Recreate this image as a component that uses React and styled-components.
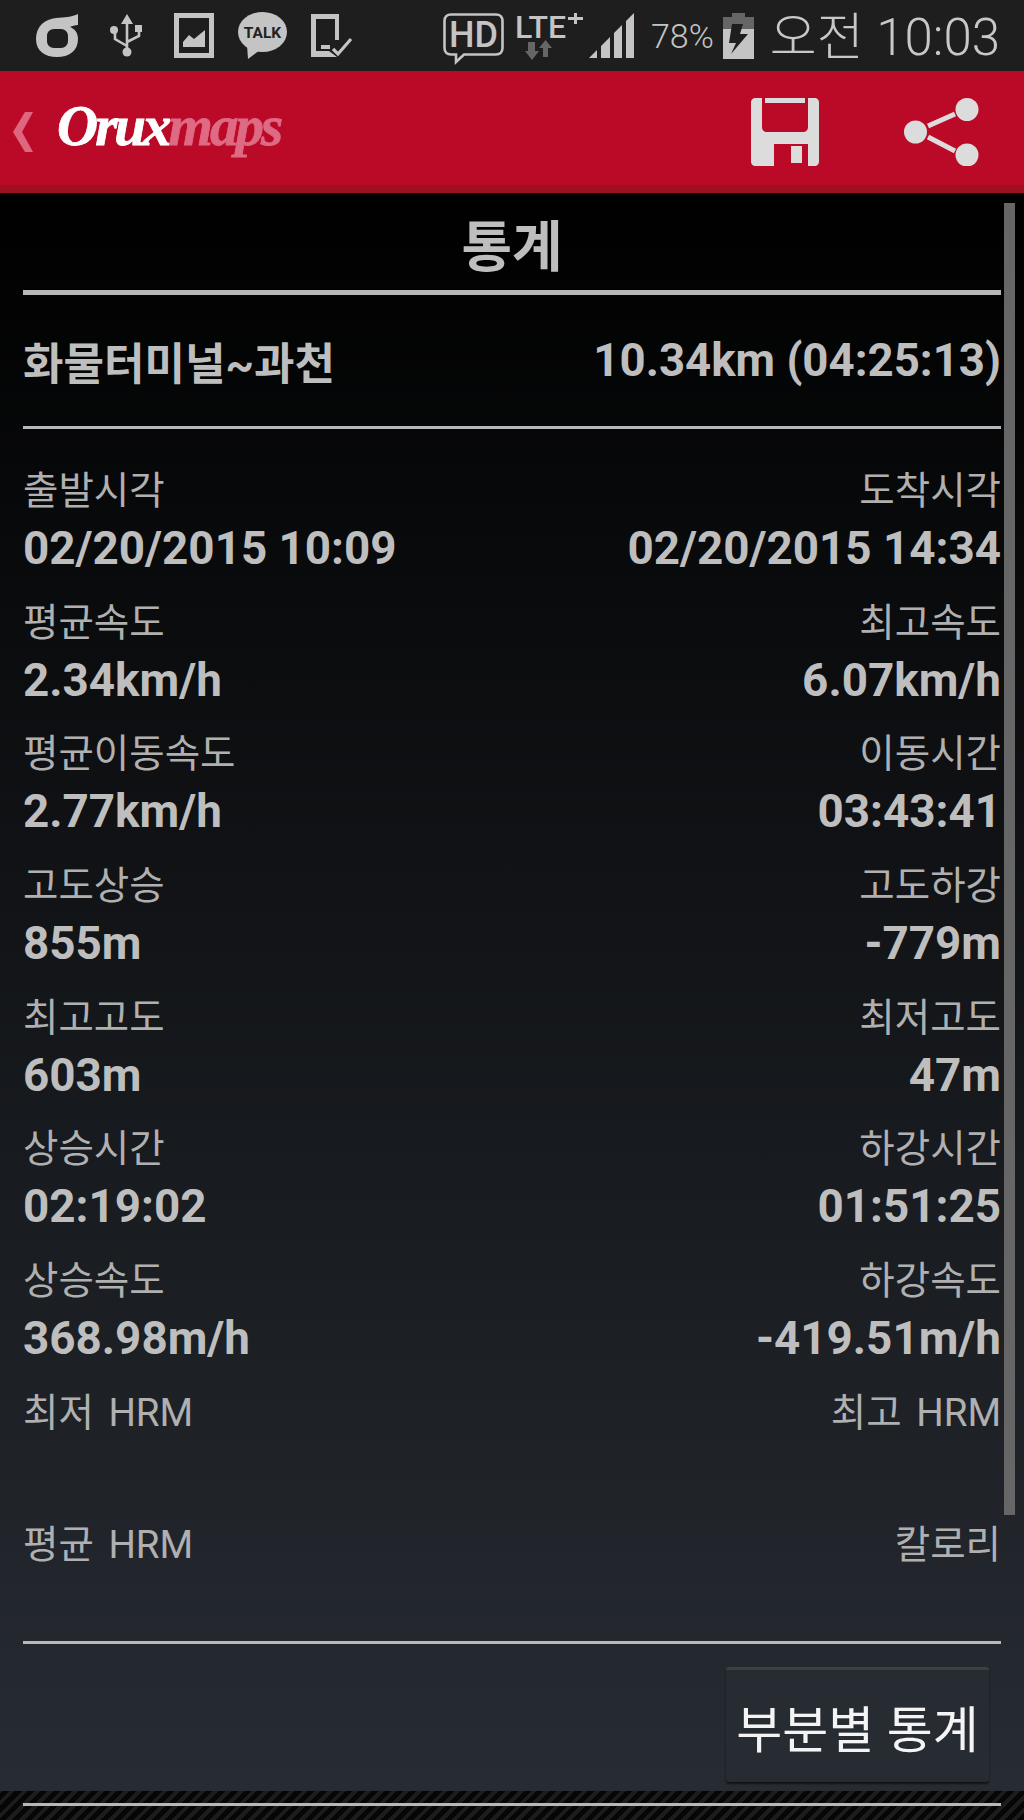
import React from "react";
import styled, { createGlobalStyle } from "styled-components";

const STATS = [
  ["출발시각", "02/20/2015 10:09", "도착시각", "02/20/2015 14:34"],
  ["평균속도", "2.34km/h", "최고속도", "6.07km/h"],
  ["평균이동속도", "2.77km/h", "이동시간", "03:43:41"],
  ["고도상승", "855m", "고도하강", "-779m"],
  ["최고고도", "603m", "최저고도", "47m"],
  ["상승시간", "02:19:02", "하강시간", "01:51:25"],
  ["상승속도", "368.98m/h", "하강속도", "-419.51m/h"],
  ["최저 HRM", "", "최고 HRM", ""],
  ["평균 HRM", "", "칼로리", ""],
];

const App = () => {
  return (
    <Page>
      <GlobalStyle />
      <StatusBar>
        <StatusGroup>
          <Svg width="42" height="44" viewBox="0 0 42 44">
            <path
              fillRule="evenodd"
              d="M42 0V11C39 11 36 12 34 13C39 15 42 19 42 25C42 37 33 43 21 43C9 43 0 37 0 25C0 12 9 5 20 4C28 3.5 36 3 42 0ZM18 15H25C29 15 32 18 32 22V27C32 31 29 34 25 34H18C14 34 11 31 11 27V22C11 18 14 15 18 15Z"
            />
          </Svg>
          <Svg width="48" height="44" viewBox="0 0 48 44">
            <path d="M25 0L31 10H19Z" />
            <circle cx="25" cy="38" r="4.5" />
            <circle cx="12" cy="16" r="4" />
            <rect x="33" y="11" width="7" height="7" />
            <path
              d="M25 8V36M25 32L13 25V18M25 28L37 22V16"
              fill="none"
              stroke="#c4c4c4"
              strokeWidth="2.6"
            />
          </Svg>
          <Svg width="40" height="45" viewBox="0 0 40 45">
            <path fillRule="evenodd" d="M0 0H40V45H0ZM5 5V40H35V5Z" />
            <path d="M9 34V29L15 22L20 26L31 17V34Z" />
          </Svg>
          <Svg width="49" height="47" viewBox="0 0 49 47">
            <ellipse cx="24.5" cy="20" rx="24.5" ry="20" />
            <path d="M9 33L10 47L22 38Z" />
            <SvgLabel x="24.5" y="26" fontSize="15.5" fill="#222" textAnchor="middle" fontWeight="700">
              TALK
            </SvgLabel>
          </Svg>
          <Svg width="41" height="44" viewBox="0 0 41 44">
            <path
              fillRule="evenodd"
              d="M0 0H28V26H24V5H5V37H18L26 43H0ZM10 35H19V31H10Z"
            />
            <path d="M22 35L27 40L40 25" fill="none" stroke="#c4c4c4" strokeWidth="3.2" />
          </Svg>
        </StatusGroup>
        <StatusGroup $tight>
          <Svg width="61" height="51" viewBox="0 0 61 51" $top="5">
            <path
              d="M8 1.5H53C57 1.5 59.5 4 59.5 8V35C59.5 39 57 41.5 53 41.5H21L13 49V41.5H8C4 41.5 1.5 39 1.5 35V8C1.5 4 4 1.5 8 1.5Z"
              fill="none"
              stroke="#c4c4c4"
              strokeWidth="2.6"
            />
            <SvgLabel x="30.5" y="34" fontSize="36" textAnchor="middle" fontWeight="500">
              HD
            </SvgLabel>
          </Svg>
          <Svg width="68" height="48" viewBox="0 0 68 48" $left="11" $top="2">
            <SvgLabel x="0" y="25" fontSize="32" fontWeight="500">
              LTE
            </SvgLabel>
            <path d="M53 4H59V0H62V4H68V7H62V11H59V7H53Z" />
            <path fill="#666" d="M13 29H20V38H24L17 47L10 38H13Z" />
            <path fill="#666" d="M33 44H28V35H24L30.5 27L37 35H33Z" />
          </Svg>
          <Svg width="45" height="44" viewBox="0 0 45 44" $left="6">
            <path d="M0 44L8 36V44ZM12 44V32L21 23V44ZM25 44V19L33 11V44ZM37 44V7L45 -1V44Z" />
          </Svg>
          <Percent>78%</Percent>
          <Svg width="31" height="46" viewBox="0 0 31 46" $left="9">
            <path fill="#666" d="M9 0H22V4H31V16H0V4H9Z" />
            <path d="M0 16H31V46H0Z" />
            <path fill="#1e1e1e" d="M20 11H9L6 30H13L8 41L25 21H17Z" />
          </Svg>
          <Clock>오전 10:03</Clock>
        </StatusGroup>
      </StatusBar>

      <ActionBar>
        <Brand>
          <BackChevron width="20" height="40" viewBox="0 0 20 40">
            <path d="M12 0H20L9 20L20 40H12L0 20Z" />
          </BackChevron>
          <Logo>
            Orux<LogoDim>maps</LogoDim>
          </Logo>
        </Brand>
        <Actions>
          <svg width="68" height="68" viewBox="0 0 68 68" fill="#dcdcdc">
            <path
              fillRule="evenodd"
              d="M4 0H11V29C11 32 13 34 16 34H52C55 34 57 32 57 29V0H64C66 0 68 2 68 4V64C68 66 66 68 64 68H57V46H23V68H4C2 68 0 66 0 64V4C0 2 2 0 4 0Z"
            />
            <rect x="14" y="0" width="40" height="5" />
            <rect x="40" y="48" width="11" height="17" />
          </svg>
          <svg width="75" height="68" viewBox="0 0 75 68" fill="#dcdcdc">
            <circle cx="11.5" cy="34" r="11.5" />
            <circle cx="63" cy="11.5" r="11.5" />
            <circle cx="63" cy="57" r="11.5" />
            <path d="M24 28L51 16M24 39L51 53" stroke="#dcdcdc" strokeWidth="5" />
          </svg>
        </Actions>
      </ActionBar>

      <Content>
        <ScrollThumb />
        <Title>통계</Title>
        <Divider $thick />
        <TrackRow>
          <TrackName>화물터미널~과천</TrackName>
          <TrackName $latin>10.34km (04:25:13)</TrackName>
        </TrackRow>
        <Divider />
        <StatList>
          {STATS.map(([leftLabel, leftValue, rightLabel, rightValue]) => (
            <React.Fragment key={leftLabel}>
              <Stat>
                <StatLabel>{leftLabel}</StatLabel>
                <StatValue>{leftValue}</StatValue>
              </Stat>
              <Stat $right>
                <StatLabel>{rightLabel}</StatLabel>
                <StatValue>{rightValue}</StatValue>
              </Stat>
            </React.Fragment>
          ))}
        </StatList>
        <Divider />
        <ButtonRow>
          <SegmentButton>부분별 통계</SegmentButton>
        </ButtonRow>
      </Content>

      <Footer>
        <Divider />
      </Footer>
    </Page>
  );
};

export default App;

const GlobalStyle = createGlobalStyle`
  html, body {
    margin: 0;
    padding: 0;
    background: #000;
  }
`;

const Page = styled.div`
  width: 1024px;
  height: 1820px;
  display: flex;
  flex-direction: column;
  overflow: hidden;
  font-family: Roboto, "Noto Sans CJK KR", sans-serif;
`;

const StatusBar = styled.div`
  height: 71px;
  flex-shrink: 0;
  box-sizing: border-box;
  padding: 0 24px 0 36px;
  display: flex;
  align-items: center;
  justify-content: space-between;
  background: #1e1e1e;
`;

const StatusGroup = styled.div`
  display: flex;
  align-items: center;
  gap: ${(p) => (p.$tight ? "0" : "24px")};
`;

const Svg = styled.svg`
  display: block;
  flex-shrink: 0;
  overflow: visible;
  fill: #c4c4c4;
  margin-left: ${(p) => p.$left || 0}px;
  margin-top: ${(p) => p.$top || 0}px;
`;

const SvgLabel = styled.text`
  font-family: Roboto, sans-serif;
`;

const Percent = styled.span`
  margin-left: 17px;
  font-size: 34px;
  font-weight: 300;
  color: #c4c4c4;
`;

const Clock = styled.span`
  margin: -6px 0 0 16px;
  font-size: 51px;
  font-weight: 300;
  color: #c8c8c8;
  white-space: nowrap;
`;

const ActionBar = styled.div`
  height: 122px;
  flex-shrink: 0;
  box-sizing: border-box;
  padding: 7px 45px 0 13px;
  display: flex;
  align-items: center;
  justify-content: space-between;
  background: #bb0a27;
  border-bottom: 8px solid #a00f20;
  box-shadow: 0 1px 0 #123;
`;

const Brand = styled.div`
  display: flex;
  align-items: center;
  gap: 24px;
`;

const BackChevron = styled.svg`
  fill: #e0667f;
`;

const Logo = styled.div`
  margin-top: -12px;
  font-family: "Liberation Serif", serif;
  font-style: italic;
  font-weight: 700;
  font-size: 57px;
  letter-spacing: -3px;
  color: #fff;
  -webkit-text-stroke: 0.8px currentColor;
`;

const LogoDim = styled.span`
  color: #de6a84;
`;

const Actions = styled.div`
  display: flex;
  align-items: center;
  gap: 85px;
`;

const Content = styled.div`
  position: relative;
  height: 1598px;
  flex-shrink: 0;
  box-sizing: border-box;
  padding: 0 23px;
  display: flex;
  flex-direction: column;
  background: linear-gradient(180deg, #000 0%, #272c33 100%);
`;

const ScrollThumb = styled.div`
  position: absolute;
  top: 10px;
  right: 9px;
  width: 11px;
  height: 1312px;
  background: #666;
`;

const Title = styled.div`
  height: 97px;
  display: flex;
  align-items: center;
  justify-content: center;
  font-size: 55px;
  font-weight: 700;
  color: #bebebe;
`;

const Divider = styled.div`
  height: ${(p) => (p.$thick ? 5 : 3)}px;
  flex-shrink: 0;
  background: #b8b8b8;
`;

const TrackRow = styled.div`
  height: 131px;
  display: flex;
  align-items: center;
  justify-content: space-between;
`;

const TrackName = styled.div`
  font-size: ${(p) => (p.$latin ? 45.6 : 44)}px;
  font-weight: 700;
  color: #bebebe;
  white-space: nowrap;
`;

const StatList = styled.div`
  padding-top: 27px;
  display: grid;
  grid-template-columns: 1fr 1fr;
  grid-auto-rows: 131.7px;
`;

const Stat = styled.div`
  padding-top: 6px;
  text-align: ${(p) => (p.$right ? "right" : "left")};
  white-space: nowrap;
`;

const StatLabel = styled.div`
  height: 58px;
  line-height: 58px;
  font-size: 38.5px;
  word-spacing: 5px;
  color: #b0b0b0;
`;

const StatValue = styled.div`
  height: 58px;
  line-height: 58px;
  font-size: 45.8px;
  font-weight: 700;
  color: #bebebe;
`;

const ButtonRow = styled.div`
  padding: 23px 12px 0 0;
  display: flex;
  justify-content: flex-end;
`;

const SegmentButton = styled.div`
  width: 263px;
  height: 115px;
  box-sizing: border-box;
  display: flex;
  align-items: center;
  justify-content: center;
  font-size: 50px;
  color: #f4f4f4;
  white-space: nowrap;
  background: #272c33;
  border-top: 3px solid #3c4045;
  border-radius: 3px;
  box-shadow: 0 2px 2px rgba(0, 0, 0, 0.6);
`;

const Footer = styled.div`
  flex: 1;
  padding: 12px 23px 0;
  background: repeating-linear-gradient(-45deg, #060606 0 5px, #1c1c1c 5px 9px);
`;
